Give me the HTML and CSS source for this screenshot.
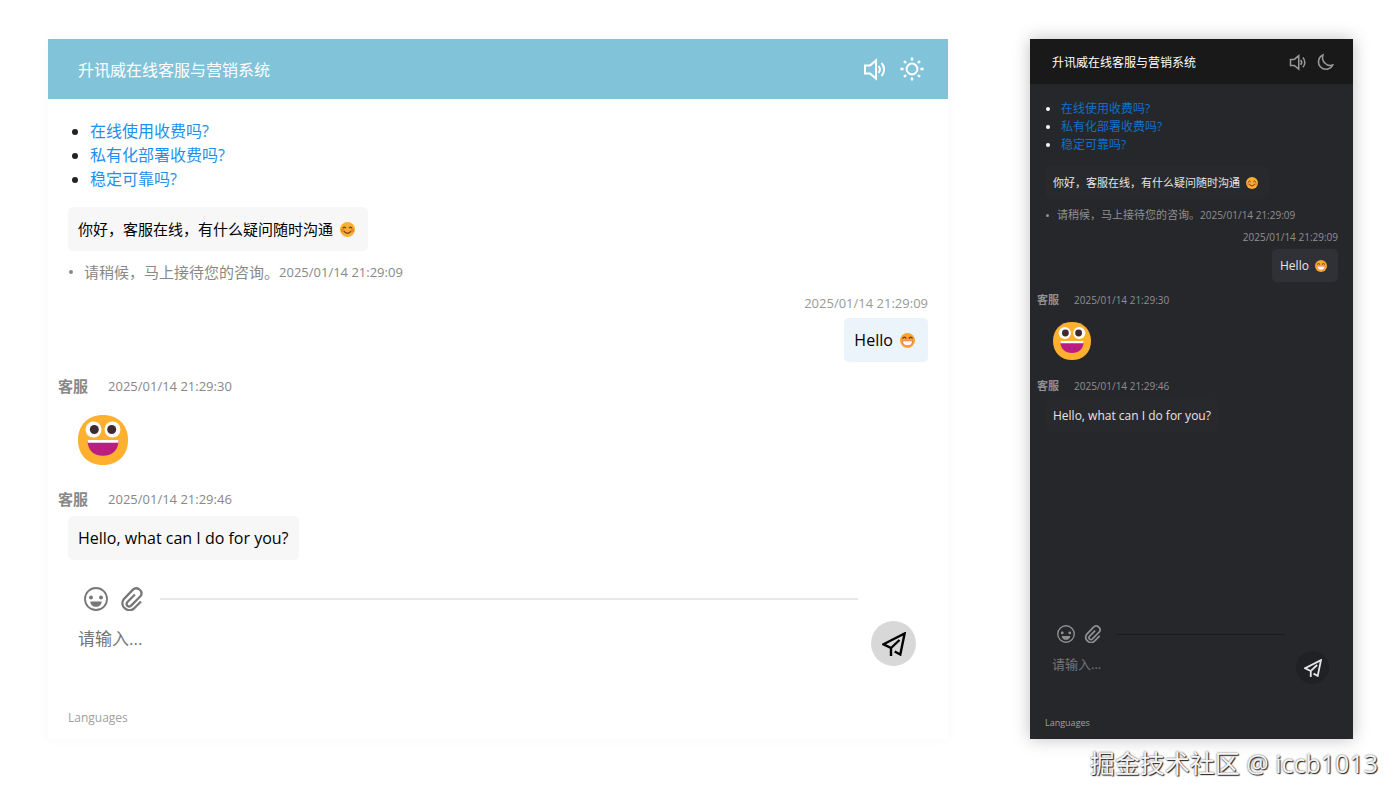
FILE: index.html
```html
<!DOCTYPE html>
<html lang="zh-CN">
<head>
    <meta charset="UTF-8">
    <meta name="viewport" content="width=device-width, initial-scale=1.0">
    <title>升讯威在线客服与营销系统</title>
    <link rel="stylesheet" href="styles.css">
</head>
<body>
    <svg class="sprite" aria-hidden="true">
        <symbol id="icon-sound" viewBox="0 0 24 24">
            <path d="M2 8.500h5l6-5v18l-6-5H2z M15.500 9.200a5 5 0 0 1 0 6.600 M18.500 6a9.500 9.500 0 0 1 0 13" />
        </symbol>
        <symbol id="icon-sun" viewBox="0 0 24 24">
            <circle cx="12" cy="12" r="5.400" />
            <path stroke-width="2.400" d="M12 .5v3M12 20.500v3M.5 12h3M20.500 12h3M4 4l2 2M18 18l2 2M4 20l2-2M18 6l2-2" />
        </symbol>
        <symbol id="icon-moon" viewBox="0 0 24 24">
            <path d="M8 2.500a10 10 0 1 0 13 13.500a10.500 10.500 0 0 1-13-13.500z" />
        </symbol>
        <symbol id="icon-smile" viewBox="0 0 24 24">
            <circle cx="12" cy="12" r="11" stroke-width="1.800" />
            <path class="solid" d="M6.300 14.500h11.400c0 3-2.500 5.300-5.700 5.300s-5.700-2.300-5.700-5.300z" />
            <circle class="solid" cx="7" cy="10.500" r="1.900" />
            <circle class="solid" cx="17" cy="10.500" r="1.900" />
        </symbol>
        <symbol id="icon-clip" viewBox="0 0 24 24">
            <path stroke-width="2.300" d="M21 14.500l-7 7a7 7 0 0 1-10.500-9l9.200-9.600a5.100 5.100 0 0 1 8.200 5.800l-9.700 9.900a2.500 2.500 0 0 1-4-3.400l7.700-7.700" />
        </symbol>
        <symbol id="icon-send" viewBox="0 0 24 24">
            <path stroke-width="2.400" d="M9 24v-8L1.500 12.300L22.600 1.500L18.300 22.500L12.700 19.500M8.500 16.500l9-8.500" />
        </symbol>
        <symbol id="face-blush" viewBox="0 0 24 24">
            <circle cx="12" cy="12" r="12" fill="#fbae2f" />
            <circle cx="4.500" cy="13.500" r="3" fill="#f47c3c" />
            <circle cx="19.500" cy="13.500" r="3" fill="#f47c3c" />
            <path d="M4.500 10q2.500-4 5 0M14.500 10q2.500-4 5 0M6.500 15q5.500 6 11 0" fill="none" stroke="#5c3a26" stroke-width="2" />
        </symbol>
        <symbol id="face-grin" viewBox="0 0 24 24">
            <circle cx="12" cy="12" r="12" fill="#fba52d" />
            <path d="M4 9q3-4.500 6 0M14 9q3-4.500 6 0" fill="none" stroke="#5c3a26" stroke-width="2" />
            <path d="M4 12.500h16q0 8-8 8t-8-8z" fill="#fff" stroke="#e0503c" stroke-width="1" />
        </symbol>
        <symbol id="face-happy" viewBox="0 0 50 50">
            <path d="M25 0C40 0 50 10 50 25S40 50 25 50S0 40 0 25S10 0 25 0z" fill="#ffb02e" />
            <circle cx="15.500" cy="14.500" r="8" fill="#fff" />
            <circle cx="34.500" cy="14.500" r="8" fill="#fff" />
            <circle cx="16.300" cy="14.500" r="4.500" fill="#402a32" />
            <circle cx="33.700" cy="14.500" r="4.500" fill="#402a32" />
            <path d="M9.500 25h31c0 10-6 15.800-15.500 15.800S9.500 35 9.500 25z" fill="#bb1d80" />
            <path d="M9.500 25h31q0 1.500-.5 2.800h-30q-.5-1.300-.5-2.800z" fill="#fff" />
        </symbol>
    </svg>

    <main class="stage">
        <section class="chat">
            <header class="chat-header">
                <h1>升讯威在线客服与营销系统</h1>
                <button type="button" aria-label="声音"><svg class="icon"><use href="#icon-sound" /></svg></button>
                <button type="button" aria-label="主题"><svg class="icon"><use href="#icon-sun" /></svg></button>
            </header>
            <div class="chat-log">
                <ul class="faq">
                    <li><a href="#">在线使用收费吗?</a></li>
                    <li><a href="#">私有化部署收费吗?</a></li>
                    <li><a href="#">稳定可靠吗?</a></li>
                </ul>
                <div class="bubble">你好，客服在线，有什么疑问随时沟通 <svg class="emoji"><use href="#face-blush" /></svg></div>
                <p class="notice">请稍候，马上接待您的咨询。<time>2025/01/14 21:29:09</time></p>
                <div class="message own">
                    <div class="message-head"><time>2025/01/14 21:29:09</time></div>
                    <div class="bubble" lang="en">Hello <svg class="emoji"><use href="#face-grin" /></svg></div>
                </div>
                <div class="message">
                    <div class="message-head"><b>客服</b><time>2025/01/14 21:29:30</time></div>
                    <div class="sticker"><svg><use href="#face-happy" /></svg></div>
                </div>
                <div class="message">
                    <div class="message-head"><b>客服</b><time>2025/01/14 21:29:46</time></div>
                    <div class="bubble" lang="en">Hello, what can I do for you?</div>
                </div>
            </div>
            <form class="composer">
                <div class="composer-main">
                    <div class="toolbar">
                        <button type="button" aria-label="表情"><svg class="icon"><use href="#icon-smile" /></svg></button>
                        <button type="button" aria-label="附件"><svg class="icon"><use href="#icon-clip" /></svg></button>
                        <hr>
                    </div>
                    <textarea aria-label="消息" placeholder="请输入..."></textarea>
                </div>
                <button type="button" class="send" aria-label="发送"><svg class="icon"><use href="#icon-send" /></svg></button>
            </form>
            <footer class="chat-footer"><button type="button">Languages</button></footer>
        </section>

        <section class="chat dark">
            <header class="chat-header">
                <h1>升讯威在线客服与营销系统</h1>
                <button type="button" aria-label="声音"><svg class="icon"><use href="#icon-sound" /></svg></button>
                <button type="button" aria-label="主题"><svg class="icon"><use href="#icon-moon" /></svg></button>
            </header>
            <div class="chat-log">
                <ul class="faq">
                    <li><a href="#">在线使用收费吗?</a></li>
                    <li><a href="#">私有化部署收费吗?</a></li>
                    <li><a href="#">稳定可靠吗?</a></li>
                </ul>
                <div class="bubble">你好，客服在线，有什么疑问随时沟通 <svg class="emoji"><use href="#face-blush" /></svg></div>
                <p class="notice">请稍候，马上接待您的咨询。<time>2025/01/14 21:29:09</time></p>
                <div class="message own">
                    <div class="message-head"><time>2025/01/14 21:29:09</time></div>
                    <div class="bubble" lang="en">Hello <svg class="emoji"><use href="#face-grin" /></svg></div>
                </div>
                <div class="message">
                    <div class="message-head"><b>客服</b><time>2025/01/14 21:29:30</time></div>
                    <div class="sticker"><svg><use href="#face-happy" /></svg></div>
                </div>
                <div class="message">
                    <div class="message-head"><b>客服</b><time>2025/01/14 21:29:46</time></div>
                    <div class="bubble" lang="en">Hello, what can I do for you?</div>
                </div>
            </div>
            <form class="composer">
                <div class="composer-main">
                    <div class="toolbar">
                        <button type="button" aria-label="表情"><svg class="icon"><use href="#icon-smile" /></svg></button>
                        <button type="button" aria-label="附件"><svg class="icon"><use href="#icon-clip" /></svg></button>
                        <hr>
                    </div>
                    <textarea aria-label="消息" placeholder="请输入..."></textarea>
                </div>
                <button type="button" class="send" aria-label="发送"><svg class="icon"><use href="#icon-send" /></svg></button>
            </form>
            <footer class="chat-footer"><button type="button">Languages</button></footer>
        </section>
    </main>
    <p class="credit">掘金技术社区 @ iccb1013</p>
</body>
</html>
```
FILE: styles.css
```css
* {
    box-sizing: border-box;
}
body {
    margin: 0;
    background: #fff;
    font-family: "Open Sans", "Noto Sans CJK SC", sans-serif;
}
h1, p, ul {
    margin: 0;
    padding: 0;
}
button {
    display: flex;
    align-items: center;
    justify-content: center;
    padding: 0;
    border: 0;
    background: none;
    color: inherit;
    font: inherit;
    cursor: pointer;
}
.sprite {
    position: absolute;
    width: 0;
    height: 0;
}
.stage {
    display: grid;
    grid-template-columns: 900fr 323fr;
    gap: 82px;
    min-height: calc(100vh - 61px);
    padding: 39px 47px 0 48px;
}

/* light theme, full size */
.chat {
    --header-height: 60px;
    --header-pad: 24px;
    --header-gap: 13px;
    --inset: 30px;
    --gutter: 20px;
    --log-top: 20px;
    --icon: 24px;
    --title-size: 16px;
    --link-line: 24px;
    --link-indent: 22px;
    --text-size: 15px;
    --latin-size: 16px;
    --text-line: 24px;
    --note-size: 15px;
    --time-size: 13px;
    --note-line: 22px;
    --small-size: 12px;
    --small-line: 18px;
    --input-size: 17px;
    --input-line: 26px;
    --input-height: 71px;
    --pad: 10px;
    --emoji: 15px;
    --sticker: 50px;
    --sticker-top: 12px;
    --message-gap: 13px;
    --own-gap: 9px;
    --own-head-gap: 4px;
    --head-gap: 6px;
    --name-gap: 20px;
    --tool-gap: 12px;
    --send: 45px;
    --send-top: 34px;
    --send-left: 13px;
    --send-right: 32px;
    --header-bg: #81c3d9;
    --header-color: #fff;
    --header-icon: #fff;
    --bg: #fff;
    --color: #000;
    --bullet: #222;
    --link: #1e90f0;
    --muted: #888;
    --own-muted: #999;
    --bubble: #f7f7f8;
    --own-bubble: #ebf4fa;
    --rule: #e8e8e8;
    --tool: #777;
    --hint: #757575;
    --send-bg: #d8d8d8;
    --footer: #a0a0a0;
    display: flex;
    flex-direction: column;
    min-width: 0;
    background: var(--bg);
    color: var(--color);
    box-shadow: 0 0 12px rgba(0, 0, 0, 0.03);
}

/* dark theme, compact size */
.chat.dark {
    --header-height: 45px;
    --header-pad: 18px;
    --header-gap: 10px;
    --inset: 22px;
    --gutter: 15px;
    --log-top: 16px;
    --icon: 18px;
    --title-size: 12px;
    --link-line: 18px;
    --link-indent: 16px;
    --text-size: 11px;
    --latin-size: 12px;
    --text-line: 17px;
    --note-size: 11px;
    --time-size: 10px;
    --note-line: 16px;
    --small-size: 9px;
    --small-line: 14px;
    --input-size: 13px;
    --input-line: 20px;
    --input-height: 56px;
    --pad: 8px;
    --emoji: 12px;
    --sticker: 38px;
    --sticker-top: 9px;
    --message-gap: 10px;
    --own-gap: 6px;
    --own-head-gap: 4px;
    --head-gap: 5px;
    --name-gap: 15px;
    --tool-gap: 9px;
    --send: 33px;
    --send-top: 26px;
    --send-left: 11px;
    --send-right: 24px;
    --header-bg: #191919;
    --header-icon: #999;
    --bg: #26272b;
    --color: #e6e6e6;
    --bullet: #fff;
    --link: #1070c8;
    --muted: #909090;
    --own-muted: #909090;
    --bubble: #28292d;
    --own-bubble: #303136;
    --rule: #1b1b1d;
    --tool: #909090;
    --hint: #757575;
    --send-bg: #202124;
    --footer: #a0a0a0;
    box-shadow: 0 0 16px rgba(0, 0, 0, 0.25);
}

.chat-header {
    display: flex;
    align-items: center;
    gap: var(--header-gap);
    height: var(--header-height);
    padding: 0 var(--header-pad) 0 var(--inset);
    background: var(--header-bg);
    color: var(--header-icon);
}
.chat-header h1 {
    flex: 1;
    color: var(--header-color);
    font-size: var(--title-size);
    font-weight: 400;
}
.icon {
    display: block;
    width: var(--icon);
    height: var(--icon);
    fill: none;
    stroke: currentColor;
    stroke-width: 2;
}
.solid {
    fill: currentColor;
    stroke: none;
}

.chat-log {
    flex: 1;
    padding: var(--log-top) var(--gutter) var(--gutter);
}
.faq {
    margin-bottom: 16px;
    padding-left: var(--link-indent);
    color: var(--bullet);
    font-size: var(--title-size);
    line-height: var(--link-line);
}
.dark .faq {
    margin-bottom: 12px;
}
.faq a {
    color: var(--link);
    text-decoration: none;
}
.bubble {
    width: fit-content;
    padding: var(--pad);
    border-radius: 5px;
    background: var(--bubble);
    font-size: var(--text-size);
    line-height: var(--text-line);
}
.bubble:lang(en) {
    font-size: var(--latin-size);
}
.emoji {
    width: var(--emoji);
    height: var(--emoji);
    margin: 0 3px;
    vertical-align: -2px;
}
.notice {
    display: flex;
    align-items: center;
    margin-top: var(--pad);
    color: var(--muted);
    font-size: var(--note-size);
    line-height: var(--note-line);
}
.notice::before {
    content: "";
    width: 4px;
    height: 4px;
    margin: 0 11px 0 1px;
    border-radius: 50%;
    background: currentColor;
}
.dark .notice::before {
    width: 3px;
    height: 3px;
    margin-right: 8px;
}
time {
    font-size: var(--time-size);
}
.message {
    margin-top: var(--message-gap);
}
.message-head {
    display: flex;
    align-items: center;
    gap: var(--name-gap);
    margin: 0 0 var(--head-gap) calc(var(--pad) * -1);
    color: var(--muted);
    font-size: var(--note-size);
    line-height: var(--note-line);
}
.sticker {
    padding: var(--sticker-top) var(--pad) var(--pad);
}
.sticker svg {
    display: block;
    width: var(--sticker);
    height: var(--sticker);
}
.own {
    display: flex;
    flex-direction: column;
    align-items: flex-end;
    margin-top: var(--own-gap);
}
.own .message-head {
    margin-bottom: var(--own-head-gap);
    color: var(--own-muted);
}
.own .bubble {
    background: var(--own-bubble);
}

.composer {
    display: flex;
    align-items: flex-start;
    padding-left: var(--inset);
}
.composer-main {
    flex: 1;
    min-width: 0;
}
.toolbar {
    display: flex;
    align-items: center;
    gap: var(--tool-gap);
    padding-left: 6px;
    color: var(--tool);
}
.dark .toolbar {
    padding-left: 5px;
}
.toolbar hr {
    flex: 1;
    height: 2px;
    margin: 0 0 0 4px;
    border: 0;
    background: var(--rule);
}
.dark .toolbar hr {
    height: 1px;
    margin-left: 5px;
}
textarea {
    display: block;
    width: 100%;
    height: var(--input-height);
    margin-top: 15px;
    padding: 0;
    border: 0;
    outline: 0;
    resize: none;
    background: none;
    color: inherit;
    font-family: inherit;
    font-size: var(--input-size);
    line-height: var(--input-line);
}
.dark textarea {
    margin-top: 11px;
}
textarea::placeholder {
    color: var(--hint);
}
.send {
    width: var(--send);
    height: var(--send);
    margin: var(--send-top) var(--send-right) 0 var(--send-left);
    border-radius: 50%;
    background: var(--send-bg);
}
.chat-footer {
    padding: 12px var(--gutter);
    color: var(--footer);
    font-size: var(--small-size);
    line-height: var(--small-line);
}
.dark .chat-footer {
    padding-top: 6px;
    padding-bottom: 9px;
}

.credit {
    padding-right: 22px;
    color: #f4f4f4;
    font-size: 25px;
    line-height: 48px;
    text-align: right;
    text-shadow: 1px 1px 1px #222, 0 0 2px #555;
}
```
